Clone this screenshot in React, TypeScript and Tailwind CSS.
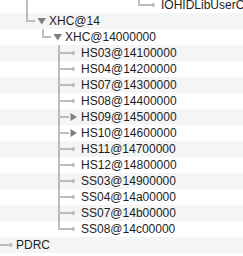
import React from "react";

const L = "#bdbdbd";
const T = "#7f7f7f";

type Row = { text: string; origin: number; draw: React.ReactNode };

const leafRows = [
  { t: "HS03@14100000", c: false },
  { t: "HS04@14200000", c: false },
  { t: "HS07@14300000", c: false },
  { t: "HS08@14400000", c: false },
  { t: "HS09@14500000", c: true },
  { t: "HS10@14600000", c: true },
  { t: "HS11@14700000", c: false },
  { t: "HS12@14800000", c: false },
  { t: "SS03@14900000", c: false },
  { t: "SS04@14a00000", c: false },
  { t: "SS07@14b00000", c: false },
  { t: "SS08@14c00000", c: false },
];

const rows: Row[] = [
  {
    text: "IOHIDLibUserClient",
    origin: 161,
    draw: (
      <>
        <rect x={26} y={0} width={2} height={16} fill={L} />
        <rect x={138} y={0} width={2} height={9} fill={L} />
        <rect x={138} y={7} width={13} height={2} fill={L} />
        <circle cx={153} cy={8} r={2} fill={L} />
      </>
    ),
  },
  {
    text: "XHC@14",
    origin: 49,
    draw: (
      <>
        <rect x={26} y={0} width={2} height={9} fill={L} />
        <rect x={26} y={7} width={9} height={2} fill={L} />
        <polygon points="37.5,5 46,5 41.75,11.5" fill={T} />
      </>
    ),
  },
  {
    text: "XHC@14000000",
    origin: 65,
    draw: (
      <>
        <rect x={42} y={0} width={2} height={9} fill={L} />
        <rect x={42} y={7} width={9} height={2} fill={L} />
        <polygon points="53.5,5 62,5 57.75,11.5" fill={T} />
      </>
    ),
  },
  ...leafRows.map((r, i) => {
    const last = i === leafRows.length - 1;
    return {
      text: r.t,
      origin: 81,
      draw: (
        <>
          <rect x={58} y={0} width={2} height={last ? 9 : 16} fill={L} />
          {r.c ? (
            <>
              <rect x={58} y={7} width={11} height={2} fill={L} />
              <polygon points="70.5,4 70.5,12 77,8" fill={T} />
            </>
          ) : (
            <>
              <rect x={58} y={7} width={13} height={2} fill={L} />
              <circle cx={73} cy={8} r={2} fill={L} />
            </>
          )}
        </>
      ),
    };
  }),
  {
    text: "PDRC",
    origin: 16,
    draw: (
      <>
        <rect x={0} y={7} width={9} height={2} fill={L} />
        <circle cx={10.5} cy={8} r={2} fill={L} />
      </>
    ),
  },
];

export default function App() {
  return (
    <div className="w-[243px] h-[256px] overflow-hidden bg-white font-['Liberation_Sans',Arial,sans-serif]">
      <div className="-mt-[3px] flex flex-col">
        {rows.map((r, i) => (
          <div
            key={i}
            className={`h-4 flex items-center shrink-0 ${i % 2 === 1 ? "bg-[#f4f5f5]" : "bg-white"}`}
          >
            <svg width={r.origin} height={16} className="shrink-0 block">
              {r.draw}
            </svg>
            <span className="text-[12px] leading-4 text-[#1e1e1e] whitespace-nowrap">{r.text}</span>
          </div>
        ))}
        <div className="h-4 bg-white" />
      </div>
    </div>
  );
}
